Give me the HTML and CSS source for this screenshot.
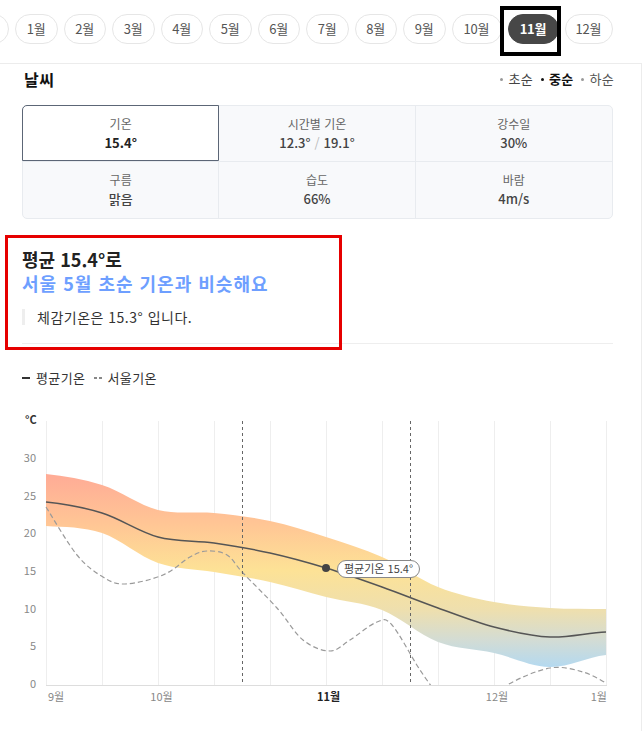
FILE: index.html
```html
<!DOCTYPE html>
<html lang="ko">
<head>
<meta charset="utf-8">
<title>날씨</title>
<link rel="stylesheet" href="styles.css">
</head>
<body>
<nav class="months">
  <span class="pill w2 lead"></span>
  <span class="pill">1월</span>
  <span class="pill">2월</span>
  <span class="pill">3월</span>
  <span class="pill">4월</span>
  <span class="pill">5월</span>
  <span class="pill">6월</span>
  <span class="pill">7월</span>
  <span class="pill">8월</span>
  <span class="pill">9월</span>
  <span class="pill w10">10월</span>
  <span class="pill active">11월</span>
  <span class="pill w2">12월</span>
</nav>
<main class="content">
  <div class="head">
    <h2 class="title">날씨</h2>
    <div class="periods">
      <span class="period"><i class="dot"></i>초순</span>
      <span class="period on"><i class="dot"></i>중순</span>
      <span class="period last"><i class="dot"></i>하순</span>
    </div>
  </div>
  <div class="stats">
    <div class="stat active"><span class="label">기온</span><span class="value">15.4°</span></div>
    <div class="stat"><span class="label">시간별 기온</span><span class="value">12.3°<span class="slash">/</span>19.1°</span></div>
    <div class="stat"><span class="label">강수일</span><span class="value">30%</span></div>
    <div class="stat row2"><span class="label">구름</span><span class="value">맑음</span></div>
    <div class="stat row2"><span class="label">습도</span><span class="value">66%</span></div>
    <div class="stat row2"><span class="label">바람</span><span class="value">4m/s</span></div>
  </div>
  <section class="summary">
    <p class="s1">평균 15.4°로</p>
    <p class="s2">서울 5월 초순 기온과 비슷해요</p>
    <p class="s3">체감기온은 15.3° 입니다.</p>
  </section>
  <div class="legend">
    <span class="leg-solid"></span><span class="leg-text">평균기온</span>
    <span class="leg-dash"></span><span class="leg-text">서울기온</span>
  </div>
  <svg class="chart" width="591" height="331" viewBox="22 400 591 331" xmlns="http://www.w3.org/2000/svg">
    <defs>
      <linearGradient id="band" gradientUnits="userSpaceOnUse" x1="0" y1="474" x2="0" y2="667">
        <stop offset="0" stop-color="#ffab96"/>
        <stop offset="0.27" stop-color="#ffc795"/>
        <stop offset="0.5" stop-color="#fde296"/>
        <stop offset="0.705" stop-color="#eedfae"/>
        <stop offset="0.86" stop-color="#d3dcd4"/>
        <stop offset="1" stop-color="#b4d9f0"/>
      </linearGradient>
      <clipPath id="plot"><rect x="40" y="415" width="572" height="270"/></clipPath>
    </defs>
    <text class="unit" x="25" y="424">°C</text>
    <g class="ylab">
      <text x="36" y="462">30</text>
      <text x="36" y="500">25</text>
      <text x="36" y="537">20</text>
      <text x="36" y="575">15</text>
      <text x="36" y="613">10</text>
      <text x="36" y="650">5</text>
      <text x="36" y="688">0</text>
    </g>
    <g class="grid">
      <line x1="46.5" y1="421" x2="46.5" y2="685"/>
      <line x1="102.5" y1="421" x2="102.5" y2="685"/>
      <line x1="158.5" y1="421" x2="158.5" y2="685"/>
      <line x1="214.5" y1="421" x2="214.5" y2="685"/>
      <line x1="270.5" y1="421" x2="270.5" y2="685"/>
      <line x1="326.5" y1="421" x2="326.5" y2="685"/>
      <line x1="382.5" y1="421" x2="382.5" y2="685"/>
      <line x1="438.5" y1="421" x2="438.5" y2="685"/>
      <line x1="494.5" y1="421" x2="494.5" y2="685"/>
      <line x1="550.5" y1="421" x2="550.5" y2="685"/>
      <line x1="606.5" y1="421" x2="606.5" y2="685"/>
    </g>
    <path fill="url(#band)" d="M46,474 C64.7,475.8 83.3,479 102,485 C120.7,491 139.3,505.3 158,510 C176.7,514.7 195.3,511.2 214,513 C232.7,514.8 251.3,517 270,521 C288.7,525 307.3,531 326,537 C344.7,543 363.3,548.7 382,557 C400.7,565.3 419.3,579.5 438,587 C456.7,594.5 475.3,598.5 494,602 C512.7,605.5 531.3,606.8 550,608 C568.7,609.2 587.3,608.8 606,609 L606,655 C587.3,657 568.7,667.3 550,667 C531.3,666.7 512.7,657.2 494,653 C475.3,648.8 456.7,649.2 438,642 C419.3,634.8 400.7,617.5 382,610 C363.3,602.5 344.7,601.7 326,597 C307.3,592.3 288.7,586.2 270,582 C251.3,577.8 232.7,575.2 214,572 C195.3,568.8 176.7,569.5 158,563 C139.3,556.5 120.7,539.2 102,533 C83.3,526.8 64.7,527.2 46,526 Z"/>
    <g clip-path="url(#plot)" class="seoul">
      <path d="M46,507 C51.2,515 67.5,543.3 77,555 C86.5,566.7 95,572.2 103,577 C111,581.8 115,584.3 125,584 C135,583.7 152.2,579.5 163,575 C173.8,570.5 182.7,561 190,557 C197.3,553 200.8,551.3 207,551 C213.2,550.7 221,551.3 227,555 C233,558.7 234.7,564.2 243,573 C251.3,581.8 267,596.8 277,608 C287,619.2 294.2,632.8 303,640 C311.8,647.2 322.2,651 330,651 C337.8,651 342.2,644.8 350,640 C357.8,635.2 370,624.5 377,622 C384,619.5 384.8,617 392,625 C399.2,633 411.2,656.7 420,670 C428.8,683.3 440.8,699.2 445,705"/>
      <path d="M470,712 C476.2,707.5 493.7,692.3 507,685 C520.3,677.7 537.3,670.2 550,668 C562.7,665.8 573.7,669.5 583,672 C592.3,674.5 602.2,681.2 606,683"/>
    </g>
    <line class="base" x1="46" y1="685.5" x2="607" y2="685.5"/>
    <g class="vdash">
      <line x1="242.5" y1="421" x2="242.5" y2="685"/>
      <line x1="410.5" y1="421" x2="410.5" y2="685"/>
    </g>
    <path class="avg" d="M46,502 C64.7,503.8 83.3,507.2 102,513 C120.7,518.8 139.3,532 158,537 C176.7,542 195.3,540.3 214,543 C232.7,545.7 251.3,548.8 270,553 C288.7,557.2 307.3,562.3 326,568 C344.7,573.7 363.3,580.3 382,587 C400.7,593.7 419.3,601.3 438,608 C456.7,614.7 475.3,622.2 494,627 C512.7,631.8 531.3,636.2 550,637 C568.7,637.8 587.3,632.8 606,632"/>
    <circle class="pt" cx="326" cy="568" r="4"/>
    <rect class="tip" x="337.5" y="560.5" width="82" height="17" rx="8.5"/>
    <text class="tip-text" x="378.5" y="573">평균기온 15.4°</text>
    <g class="xlab">
      <text x="48" y="701">9월</text>
      <text x="161.5" y="701" text-anchor="middle">10월</text>
      <text class="cur" x="328.5" y="701" text-anchor="middle">11월</text>
      <text x="497" y="701" text-anchor="middle">12월</text>
      <text x="607" y="701" text-anchor="end">1월</text>
    </g>
  </svg>
</main>
</body>
</html>
```

FILE: styles.css
```css
html, body {
  margin: 0;
  padding: 0;
  background: #fff;
}
body {
  overflow: hidden;
  font-family: "Noto Sans CJK KR", "Noto Sans", sans-serif;
  color: #333;
}

/* month selector */
.months {
  display: flex;
  gap: 6px;
  height: 64px;
  width: 642px;
  box-sizing: border-box;
  padding-top: 14px;
  border-bottom: 1px solid #ececec;
}
.pill {
  flex: none;
  position: relative;
  width: 42.5px;
  height: 30px;
  box-sizing: border-box;
  border: 1px solid #e6e6e6;
  border-radius: 15px;
  display: flex;
  align-items: center;
  justify-content: center;
  font-size: 13px;
  line-height: 16px;
  color: #555;
  letter-spacing: -0.2px;
}
.pill.w2 { width: 48px; }
.pill.w10 { width: 50px; }
.pill.lead { margin-left: -39px; }
.pill.active {
  width: 51px;
  background: #474747;
  border-color: #474747;
  color: #fff;
  font-weight: 700;
}
.pill.active::after {
  content: "";
  position: absolute;
  top: -9px;
  left: -8.5px;
  right: -3.5px;
  bottom: -13px;
  border: 4px solid #000;
  box-sizing: border-box;
}

/* content */
.content {
  width: 642px;
  min-height: calc(100vh - 64px);
  box-sizing: border-box;
  padding: 0 28px 0 22px;
  border-right: 1px solid #ececec;
}
.head {
  height: 30px;
  margin-bottom: 11px;
  display: flex;
  align-items: center;
  justify-content: space-between;
}
.title {
  margin: 0;
  padding-left: 2px;
  font-size: 16px;
  line-height: 20px;
  font-weight: 700;
  color: #111;
  letter-spacing: 0.5px;
}
.periods {
  display: flex;
  align-items: center;
  gap: 8px;
  font-size: 13px;
  line-height: 16px;
  margin-right: -1px;
}
.period {
  display: flex;
  align-items: center;
  gap: 5px;
  color: #444;
  letter-spacing: 0.3px;
}
.period .dot {
  width: 3px;
  height: 3px;
  border-radius: 50%;
  background: #999;
}
.period.on { color: #111; font-weight: 700; }
.period.on .dot { background: #111; }
.period.last { color: #555; }

/* stats */
.stats {
  display: grid;
  grid-template-columns: repeat(3, 1fr);
  grid-template-rows: 56px 56px;
  height: 114px;
  box-sizing: border-box;
  border: 1px solid #e8ebef;
  border-radius: 5px;
  background: #f8f9fb;
}
.stat {
  position: relative;
  display: flex;
  flex-direction: column;
  align-items: center;
  justify-content: center;
  gap: 2px;
  box-sizing: border-box;
  border-right: 1px solid #e8ebef;
  border-bottom: 1px solid #e8ebef;
}
.stat:nth-child(3n) { border-right: none; }
.stat.row2 { border-bottom: none; }
.stat.active { background: #fff; }
.stat.active::after {
  content: "";
  position: absolute;
  top: -1px;
  left: -1px;
  right: -1px;
  bottom: 0;
  border: 1px solid #5c6676;
  border-top-left-radius: 5px;
}
.label {
  font-size: 12px;
  line-height: 16px;
  color: #666;
}
.value {
  font-size: 13px;
  line-height: 18px;
  font-weight: 500;
  color: #444;
}
.stat.active .value { color: #222; font-weight: 700; }
.slash { color: #bbb; font-weight: 400; margin: 0 4px; }

/* summary */
.summary {
  position: relative;
  margin-top: 28px;
  padding-bottom: 18px;
  border-bottom: 1px solid #eee;
}
.summary::before {
  content: "";
  position: absolute;
  top: -12px;
  left: -17px;
  width: 337px;
  height: 115px;
  box-sizing: border-box;
  border: 3px solid #e60000;
}
.summary p { margin: 0; }
.s1 {
  font-size: 18px;
  line-height: 24px;
  font-weight: 700;
  color: #222;
}
.s2 {
  font-size: 18px;
  line-height: 24px;
  font-weight: 700;
  color: #6e9fff;
  letter-spacing: 1px;
}
.summary .s3 {
  margin-top: 14px;
  font-size: 14px;
  line-height: 16px;
  color: #333;
  letter-spacing: 0.5px;
  border-left: 3px solid #eee;
  padding-left: 12px;
}

/* legend */
.legend {
  margin-top: 26px;
  height: 16px;
  display: flex;
  align-items: center;
  font-size: 13px;
  line-height: 16px;
  color: #333;
  letter-spacing: 0.4px;
}
.leg-solid {
  width: 8px;
  height: 2px;
  background: #333;
  margin-right: 6px;
}
.leg-dash {
  width: 8px;
  height: 2px;
  background: repeating-linear-gradient(90deg, #888 0 3px, transparent 3px 5px);
  margin-left: 9px;
  margin-right: 5px;
}

/* chart */
.chart {
  display: block;
  margin-top: 14px;
  font-family: "Noto Sans CJK KR", "Noto Sans", sans-serif;
}
.unit { font-size: 11px; fill: #333; font-weight: 700; }
.ylab text { font-size: 11px; fill: #888; text-anchor: end; }
.grid line { stroke: #eeeeee; stroke-width: 1; }
.base { stroke: #dddddd; stroke-width: 1; }
.vdash line { stroke: #666; stroke-width: 1; stroke-dasharray: 3 3; }
.seoul path { fill: none; stroke: #9a9a9a; stroke-width: 1.2; stroke-dasharray: 5 3; }
.avg { fill: none; stroke: #555; stroke-width: 1.5; }
.pt { fill: #444; }
.tip { fill: #fff; stroke: #888; stroke-width: 1; }
.tip-text { font-size: 11px; fill: #444; text-anchor: middle; }
.xlab text { font-size: 11px; fill: #888; }
.xlab .cur { fill: #222; font-weight: 700; }
```
